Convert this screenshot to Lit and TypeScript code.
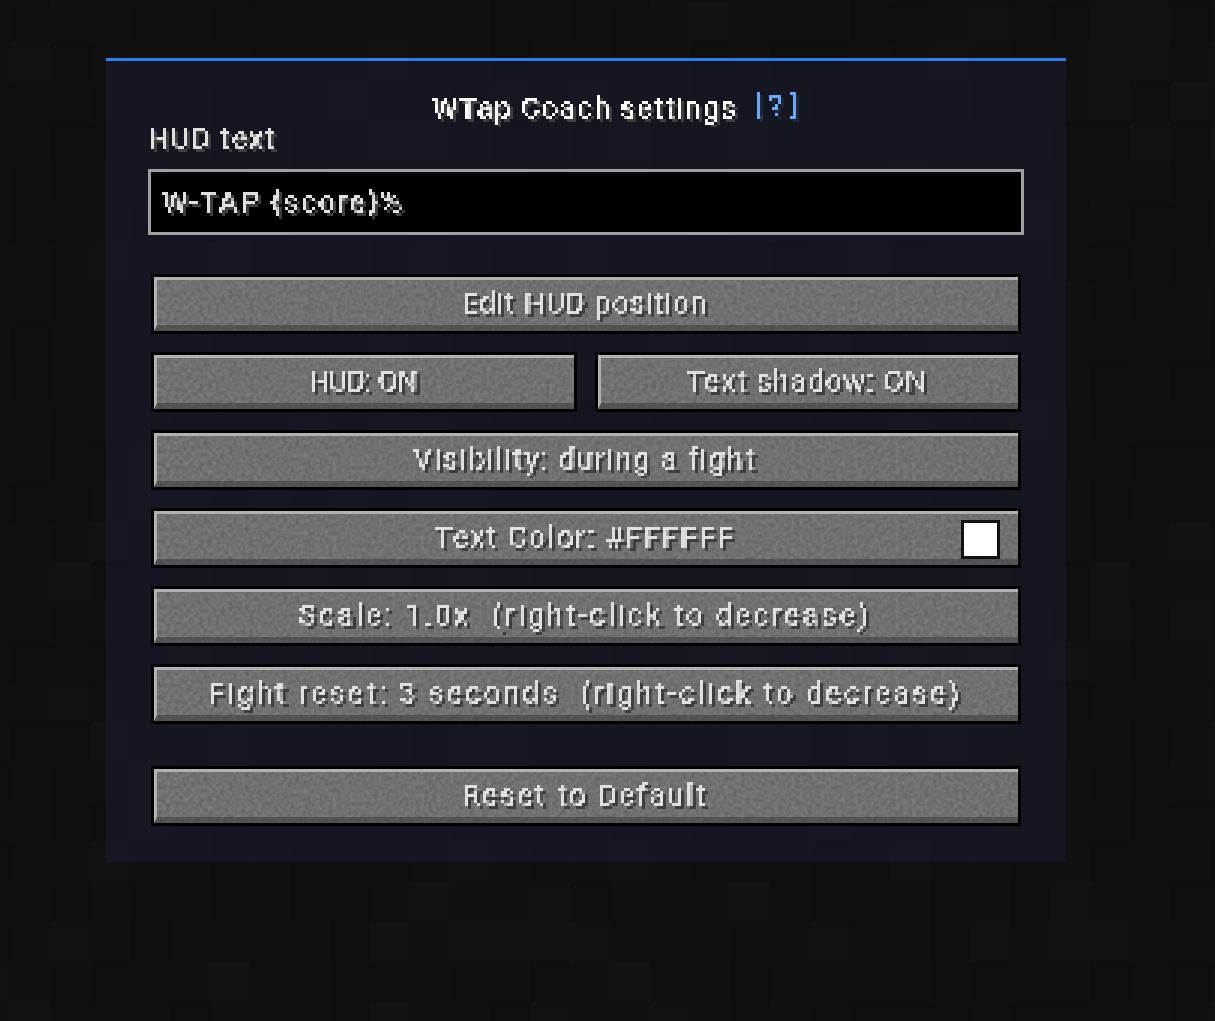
import { LitElement, html, css, svg } from "lit";
import { customElement } from "lit/decorators.js";

interface Btn { label: string; w: number; swatch?: boolean; }

function rng(seed: number) {
  let s = seed;
  return () => {
    s = (s * 1664525 + 1013904223) >>> 0;
    return s / 4294967296;
  };
}

const tiles = (() => {
  const r = rng(77);
  const out: { x: number; y: number; c: string }[] = [];
  const shades = ["#0f0f0f", "#0f0f0f", "#101010", "#101010", "#111111", "#111111", "#121212"];
  for (let y = -38; y < 1021; y += 40) {
    for (let x = -30; x < 1215; x += 40) {
      out.push({ x, y, c: shades[Math.floor(r() * shades.length)] });
    }
  }
  return out;
})();

@customElement("app-root")
export class AppRoot extends LitElement {
  static styles = css`
    :host {
      display: block;
      position: relative;
      width: 1215px;
      height: 1021px;
      overflow: hidden;
      background: #101010;
      font-family: "Roboto", "Liberation Sans", sans-serif;
      font-size: 29px;
      font-weight: 400;
      line-height: 24px;
      color: #e0e0e0;
    }
    .bg {
      position: absolute;
      inset: 0;
      width: 1215px;
      height: 1021px;
    }
    .defs {
      position: absolute;
      width: 0;
      height: 0;
    }
    .page {
      position: relative;
      padding: 58px 0 0 106px;
    }
    .panel {
      width: 960px;
      height: 804px;
      box-sizing: border-box;
      border-top: 3px solid #2f7cf0;
      background: rgba(24, 30, 46, 0.5);
      padding: 35px 45px 36px;
      display: flex;
      flex-direction: column;
    }
    .t {
      display: inline-block;
      white-space: pre;
      padding: 4px 6px 6px 3px;
      margin: -4px -6px -6px -3px;
      text-shadow: 3px 3px 0 #3f3f3f;
      filter: url(#px);
    }
    .title {
      display: flex;
      justify-content: center;
      align-items: flex-start;
      gap: 17px;
      height: 24px;
      color: #fff;
      padding-left: 64px;
    }
    .help {
      color: #6aa9fa;
      text-shadow: 3px 3px 0 #1b2a40;
      position: relative;
      top: -3px;
    }
    .label {
      display: flex;
      height: 24px;
      margin: 6px 0 0 -3px;
    }
    .input {
      height: 66px;
      box-sizing: border-box;
      margin: 19px -3px 0;
      border: 3px solid #a0a0a0;
      background: #000;
      padding: 18px 0 0 11px;
      display: flex;
    }
    .stack {
      display: flex;
      flex-direction: column;
      gap: 18px;
      margin-top: 39px;
    }
    .row {
      display: flex;
      gap: 18px;
    }
    .btn {
      flex: none;
      height: 60px;
      box-sizing: border-box;
      border: 3px solid #000;
      position: relative;
      display: flex;
      align-items: center;
      justify-content: center;
      padding: 0 2px 3px 0;
      overflow: hidden;
      background: #6f6f6f;
    }
    .row .btn {
      flex: 1;
    }
    .stone {
      position: absolute;
      inset: 0;
      background: #707070;
      filter: url(#stone);
    }
    .edge {
      position: absolute;
      inset: 0;
      box-sizing: border-box;
      border-top: 3px solid #b2b2b2;
      border-left: 3px solid #b2b2b2;
      border-bottom: 6px solid rgba(40, 40, 40, 0.4);
    }
    .cap {
      position: relative;
      display: flex;
    }
    .swatch {
      position: absolute;
      right: 18px;
      top: 9px;
      width: 39px;
      height: 39px;
      box-sizing: border-box;
      border: 3px solid #111;
      background: #fff;
    }
    .reset {
      display: flex;
      flex-direction: column;
      margin-top: 42px;
    }
  `;

  updated() {
    this.renderRoot.querySelectorAll<HTMLElement>("[data-w]").forEach((el) => {
      const target = Number(el.dataset.w);
      const text = el.textContent ?? "";
      el.style.letterSpacing = "0px";
      const natural = el.getBoundingClientRect().width - 9;
      el.style.letterSpacing = `${(target - natural) / Math.max(1, text.length)}px`;
    });
  }

  private text(label: string, w: number, extra = "") {
    return html`<span class="t ${extra}" data-w=${w}>${label}</span>`;
  }

  private btn(b: Btn) {
    return html`<div class="btn">
      <div class="stone"></div>
      <div class="edge"></div>
      <div class="cap">${this.text(b.label, b.w)}</div>
      ${b.swatch ? html`<div class="swatch"></div>` : ""}
    </div>`;
  }

  render() {
    return html`
      <svg class="bg" viewBox="0 0 1215 1021" aria-hidden="true">
        ${tiles.map((t) => svg`<rect x=${t.x} y=${t.y} width="40" height="40" fill=${t.c}></rect>`)}
      </svg>
      <svg class="defs" aria-hidden="true">
        <defs>
          <filter id="px" x="0" y="0" width="100%" height="100%" color-interpolation-filters="sRGB">
            <feFlood x="1" y="1" width="1" height="1" flood-color="#000"></feFlood>
            <feComposite width="3" height="3"></feComposite>
            <feTile result="grid"></feTile>
            <feComposite in="SourceGraphic" in2="grid" operator="in"></feComposite>
            <feComponentTransfer>
              <feFuncA type="discrete" tableValues="0 1 1 1 1 1 1 1"></feFuncA>
            </feComponentTransfer>
            <feMorphology operator="dilate" radius="1"></feMorphology>
          </filter>
          <filter id="stone" x="0" y="0" width="100%" height="100%" color-interpolation-filters="sRGB">
            <feTurbulence type="fractalNoise" baseFrequency="0.24" numOctaves="2" seed="9" result="n"></feTurbulence>
            <feColorMatrix
              in="n"
              type="matrix"
              values="0.15 0 0 0 0.365  0.15 0 0 0 0.365  0.15 0 0 0 0.365  0 0 0 0 1"
            ></feColorMatrix>
          </filter>
        </defs>
      </svg>
      <div class="page">
        <div class="panel">
          <div class="title">
            ${this.text("WTap Coach settings", 305)}
            ${this.text("[?]", 50, "help")}
          </div>
          <div class="label">${this.text("HUD text", 128)}</div>
          <div class="input">${this.text("W-TAP {score}%", 242)}</div>
          <div class="stack">
            ${this.btn({ label: "Edit HUD position", w: 246 })}
            <div class="row">
              ${this.btn({ label: "HUD: ON", w: 108 })}
              ${this.btn({ label: "Text shadow: ON", w: 240 })}
            </div>
            ${this.btn({ label: "Visibility: during a fight", w: 342 })}
            ${this.btn({ label: "Text Color: #FFFFFF", w: 300, swatch: true })}
            ${this.btn({ label: "Scale: 1.0x  (right-click to decrease)", w: 572 })}
            ${this.btn({ label: "Fight reset: 3 seconds  (right-click to decrease)", w: 754 })}
          </div>
          <div class="reset">${this.btn({ label: "Reset to Default", w: 246 })}</div>
        </div>
      </div>
    `;
  }
}
